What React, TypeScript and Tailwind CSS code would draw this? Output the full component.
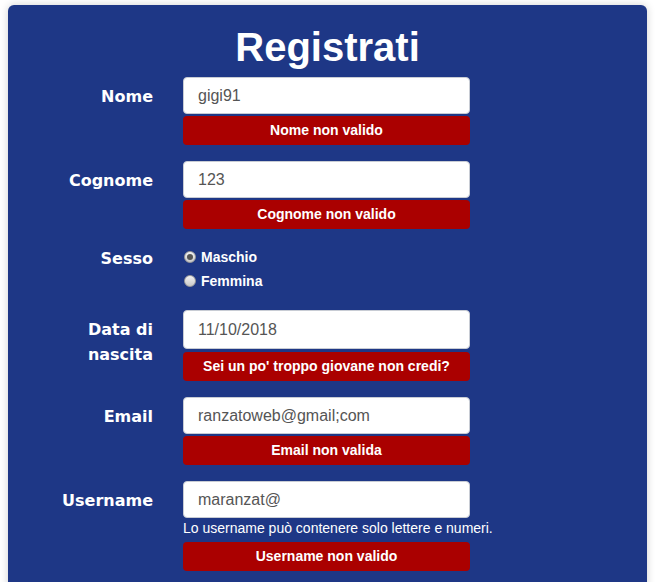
import React from 'react';

const labelFont = { fontFamily: '"DejaVu Sans", Verdana, sans-serif' };
const arial = { fontFamily: '"Liberation Sans", Arial, sans-serif' };

function Label({ children }: { children: React.ReactNode }) {
  return (
    <div
      className="w-[100px] ml-[45px] mr-[30px] shrink-0 text-right text-white font-bold text-[16px] leading-[25px] pt-[7px]"
      style={labelFont}
    >
      {children}
    </div>
  );
}

function TextBox({ value, tall }: { value: string; tall?: boolean }) {
  return (
    <div
      className={`w-[287px] ${tall ? 'h-[39px]' : 'h-[37px]'} bg-white border border-[#c8ccd4] rounded-[4px] flex items-center pl-[14px] text-[16px] text-[#555555]`}
      style={arial}
    >
      {value}
    </div>
  );
}

function ErrorBox({ text, className = 'mt-[2px]' }: { text: string; className?: string }) {
  return (
    <div
      className={`w-[287px] h-[29px] bg-[#aa0000] rounded-[4px] flex items-center justify-center text-white font-bold text-[14px] ${className}`}
      style={arial}
    >
      {text}
    </div>
  );
}

function Radio({ checked, label }: { checked?: boolean; label: string }) {
  return (
    <div className="h-[24px] flex items-center gap-[5px] pl-[1px]">
      <span className="w-[12px] h-[12px] rounded-full bg-gradient-to-b from-[#f2f2f2] to-[#c9c9c9] border border-[#9a9a9a] flex items-center justify-center">
        {checked && <span className="w-[6px] h-[6px] rounded-full bg-[#555555]" />}
      </span>
      <span className="text-white font-bold text-[14px]" style={arial}>
        {label}
      </span>
    </div>
  );
}

export default function App() {
  return (
    <div className="min-h-[582px] bg-white px-[8px] pt-[5px] overflow-hidden">
      <div className="bg-[#1e3786] rounded-[6px] shadow-[0_0_8px_rgba(0,0,0,0.18)] pt-[19px] pb-[40px]">
        <h1
          className="text-center text-white font-bold text-[40px] leading-[46px] mb-[7px]"
          style={arial}
        >
          Registrati
        </h1>

        <div className="flex flex-col gap-[16px]">
          <div className="flex">
            <Label>Nome</Label>
            <div>
              <TextBox value="gigi91" />
              <ErrorBox text="Nome non valido" />
            </div>
          </div>

          <div className="flex">
            <Label>Cognome</Label>
            <div>
              <TextBox value="123" />
              <ErrorBox text="Cognome non valido" />
            </div>
          </div>

          <div className="flex">
            <div
              className="w-[100px] ml-[45px] mr-[30px] shrink-0 text-right text-white font-bold text-[16px] leading-[25px] pt-[1px]"
              style={labelFont}
            >
              Sesso
            </div>
            <div className="pb-[1px]">
              <Radio checked label="Maschio" />
              <Radio label="Femmina" />
            </div>
          </div>

          <div className="flex">
            <Label>Data di nascita</Label>
            <div>
              <TextBox value="11/10/2018" tall />
              <ErrorBox text="Sei un po' troppo giovane non credi?" className="mt-[3px]" />
            </div>
          </div>

          <div className="flex">
            <Label>Email</Label>
            <div>
              <TextBox value="ranzatoweb@gmail;com" />
              <ErrorBox text="Email non valida" />
            </div>
          </div>

          <div className="flex">
            <Label>Username</Label>
            <div>
              <TextBox value="maranzat@" />
              <div className="text-white text-[14px] leading-[18px] mt-[1px]" style={arial}>
                Lo username può contenere solo lettere e numeri.
              </div>
              <ErrorBox text="Username non valido" className="mt-[5px]" />
            </div>
          </div>
        </div>
      </div>
    </div>
  );
}
